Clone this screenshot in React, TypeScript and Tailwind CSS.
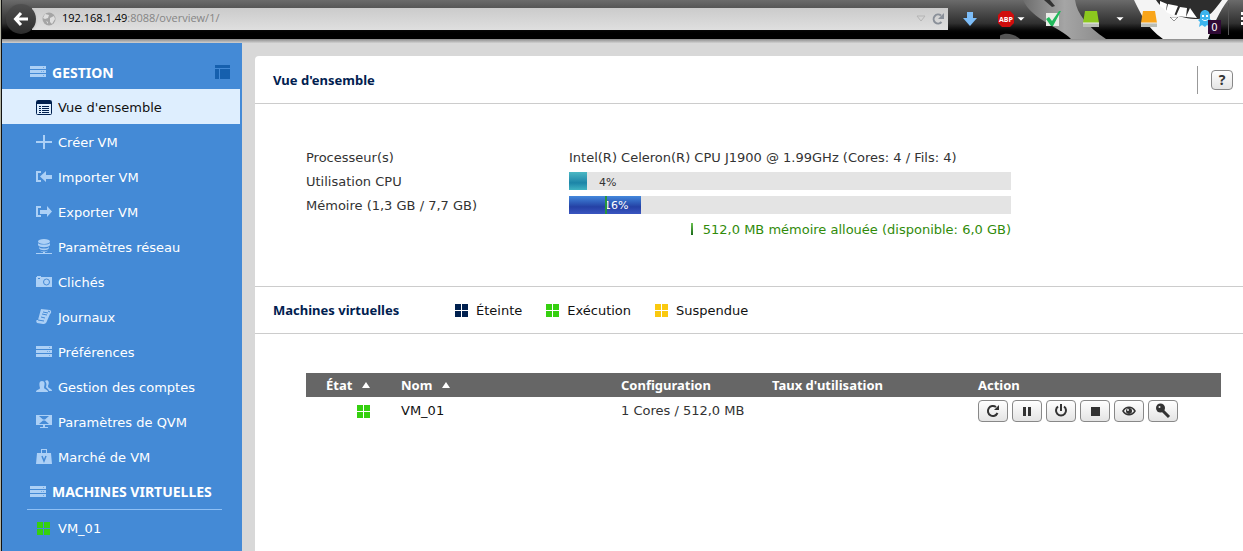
import type { ReactNode } from "react";

const logoTiles = "M0 0h6v6H0z M7 0h6v6H7z M0 7h6v6H0z M7 7h6v6H7z";

function Tiles({ className }: { className: string }) {
  return (
    <svg viewBox="0 0 13 13" className={"w-[13px] h-[13px] shrink-0 " + className} fill="currentColor">
      <path d={logoTiles} />
    </svg>
  );
}

function Servers() {
  return (
    <>
      <path d="M0 2h16v3H0z M0 6h16v3H0z M0 10h16v3H0z" />
      <path d="M13 3h1v1h-1z M11 7h1v1h-1z M13 7h1v1h-1z M13 11h1v1h-1z" fill="#6fa9e6" />
    </>
  );
}

function NavIcon({ children }: { children: ReactNode }) {
  return (
    <svg viewBox="0 0 16 16" className="w-4 h-4 shrink-0" fill="currentColor">
      {children}
    </svg>
  );
}

const navItems = [
  {
    label: "Vue d'ensemble",
    active: true,
    icon: (
      <>
        <rect x="0.500" y="1.500" width="15" height="14" rx="1" fill="none" stroke="currentColor" />
        <path d="M1 2h14v3H1z M3 7h2v1H3z M6 7h7v1H6z M3 9h2v1H3z M6 9h7v1H6z M3 11h2v1H3z M6 11h7v1H6z M3 13h2v1H3z M6 13h7v1H6z" />
      </>
    ),
  },
  { label: "Créer VM", icon: <path d="M7 1h2v6h7v2H9v6H7V9H0V7h7z" /> },
  {
    label: "Importer VM",
    icon: <path d="M0 2h5v2H2v7h3v2H0z M4 7.500L10 2v4h6v4h-6v3z" />,
  },
  {
    label: "Exporter VM",
    icon: <path d="M0 2h5v2H2v7h3v2H0z M16 7.500L11 2v4H4v4h7v3z" />,
  },
  {
    label: "Paramètres réseau",
    icon: (
      <>
        <ellipse cx="8" cy="2.500" rx="6" ry="2.500" />
        <path d="M2 4c1 2 11 2 12 0v2c-1 3-11 3-12 0z M3 8c1 2 9 2 10 0v1c-1 3-9 3-10 0z M4 11c1 2 7 2 8 0-1 2-2 2-3 2v1h7v1H0v-1h7v-1c-1 0-2 0-3-2z" />
      </>
    ),
  },
  {
    label: "Clichés",
    icon: (
      <>
        <path d="M1 3V2h4v1h11v10H0V3z" />
        <circle cx="10.500" cy="8" r="3" fill="none" stroke="#448ad6" />
        <path d="M2 4h2v1H2z" fill="#448ad6" />
      </>
    ),
  },
  {
    label: "Journaux",
    icon: (
      <>
        <path d="M5 0l9 1c2 1 1 4 0 4l-3 7c-1 3-3 3-4 3l-6-1c-1-1-1-3 0-3h1z" />
        <path d="M7 3l5 1 M6 5l5 1 M5 8l4 1 M2 11l6 1 M12 2l2 1" fill="none" stroke="#448ad6" />
      </>
    ),
  },
  { label: "Préférences", icon: <Servers /> },
  {
    label: "Gestion des comptes",
    icon: (
      <>
        <path d="M6 2c3 0 3 3 2 6 0 3 4 2 4 5H0c0-3 4-2 4-4C3 5 3 2 6 2z" />
        <path d="M9 2c3-2 5 1 3 5 0 3 4 2 4 5h-3c0-2-3-3-3-4 1-3 0-5-1-6z" />
      </>
    ),
  },
  {
    label: "Paramètres de QVM",
    icon: (
      <>
        <path d="M0 1h16v10H9v2h3v1H4v-1h3v-2H0z" />
        <path d="M3 2h10L9 5.500z M3 10h10L9 6.500H7z M3 2l4 3.500h2z" fill="#448ad6" />
      </>
    ),
  },
  {
    label: "Marché de VM",
    icon: (
      <>
        <path d="M5 0h6v4h4l1 11H0L1 4h4z M6 1v3h4V1z" fillRule="evenodd" />
        <path d="M6 7l2 5 2-5" fill="none" stroke="#448ad6" strokeWidth="1.5" />
      </>
    ),
  },
];

function SectionTitle({ children }: { children: ReactNode }) {
  return (
    <h2 className="flex items-center gap-1.5 font-['Noto_Sans',sans-serif] text-[14px] font-bold text-white">
      <span className="text-[#acd0f6]">
        <NavIcon>
          <Servers />
        </NavIcon>
      </span>
      {children}
    </h2>
  );
}

function Caret() {
  return (
    <svg viewBox="0 0 8 4" className="w-2 h-1 shrink-0" fill="#fff" stroke="#333" strokeWidth="0.5">
      <path d="M0 0h8L4 4z" />
    </svg>
  );
}

function SortArrow() {
  return (
    <svg viewBox="0 0 8 6" className="h-1.5 w-2" fill="#fff">
      <path d="M4 0l4 6H0z" />
    </svg>
  );
}

function Drive({ color }: { color: string }) {
  return (
    <svg viewBox="0 0 18 18" className="w-[18px] h-[18px] shrink-0">
      <path d="M3 1h12l2 12H1z" fill={color} />
      <path d="M1 13h16v4H1z" fill="#b9bdb6" />
      <path d="M1 13h16" stroke="#eee" />
    </svg>
  );
}

// persona artwork behind the toolbar icons
function Persona() {
  return (
    <svg viewBox="0 0 243 39" className="absolute top-0 right-0 h-full w-[243px]">
      <defs>
        <linearGradient id="smoke" x1="0" x2="1">
          <stop offset="0" stopColor="#6d6d6d" />
          <stop offset="0.5" stopColor="#a5a5a5" />
          <stop offset="1" stopColor="#8a8a8a" />
        </linearGradient>
      </defs>
      <path d="M23 0h52c2 14 12 26 31 39H71C60 27 32 20 23 0z" fill="url(#smoke)" />
      <path d="M44 0l8 7 3-1-5-6z" fill="#333" />
      <path d="M-4 39c5-7 16-7 24 0z" fill="#555" />
      <path d="M134 0h94c-9 12-14 24-20 39h-45C146 27 141 14 134 0z" fill="#f4f4f4" />
      <path d="M156 0h66c-7 9-13 19-24 19-19 0-35-8-42-19z" fill="#2d2d2d" />
      <path d="M160 1l7 3-1 7-6-5z M168 4l10 2-4 10-8-4z M180 7l7 1-1 9-10-1z M190 8l7 10-11-1z" fill="#fff" />
    </svg>
  );
}

function BrowserBar() {
  return (
    <header className="relative flex h-[39px] items-center overflow-hidden bg-linear-to-b from-[#6b6b6b] via-[#303030] via-60% to-black to-90% pb-0.5">
      <Persona />
      <button aria-label="Retour" className="z-10 ml-1 grid h-[30px] w-[30px] shrink-0 place-items-center rounded-full bg-linear-to-b from-[#505050] to-[#2c2c2c] shadow">
        <svg viewBox="0 0 16 16" className="h-4 w-4" fill="none" stroke="#fff" strokeWidth="3">
          <path d="M8 2L2.500 8 8 14 M3 8h12" />
        </svg>
      </button>
      <div className="-ml-1 flex h-[22px] min-w-0 flex-1 items-center bg-linear-to-b from-[#cbcbcb] to-[#dfdfdf] pr-1 pl-2.5">
        <svg viewBox="0 0 14 14" className="h-3.5 w-3.5 shrink-0">
          <circle cx="7" cy="7" r="6.500" fill="#a4a4a4" />
          <path d="M3 2l4 1-1 3-3 1-2-1z M8 6l4-2 1 3-3 5-2-2z M4 9l2 1v2z" fill="#dedede" />
        </svg>
        <div className="ml-1.5 flex-1 font-['Open_Sans',sans-serif] text-[11px] text-[#858585]">
          <span className="text-black">192.168.1.49</span>:8088/overview/1/
        </div>
        <svg viewBox="0 0 10 7" className="h-[7px] w-2.5" fill="none" stroke="#b5b5b5">
          <path d="M1 1h8L5 6z" />
        </svg>
        <button aria-label="Recharger" className="ml-1.5">
          <svg viewBox="0 0 12 12" className="h-3 w-3" fill="none" stroke="#8a9099" strokeWidth="2">
            <path d="M9.500 9A4.500 4.500 0 1 1 9 2.500" />
            <path d="M12 0v6H6z" fill="#8a9099" stroke="none" />
          </svg>
        </button>
      </div>
      <div className="relative flex w-[295px] shrink-0 items-center">
        <svg viewBox="0 0 14 16" className="ml-[15px] h-4 w-3.5 shrink-0">
          <path d="M4 1h6v6h4l-7 8-7-8h4z" fill="#7dbdf8" />
        </svg>
        <svg viewBox="0 0 18 18" className="ml-5 h-[18px] w-[18px] shrink-0">
          <path d="M5 1h8l4 4v8l-4 4H5l-4-4V5z" fill="#d00d0d" />
          <text x="9" y="12" textAnchor="middle" fontSize="7" fontWeight="700" fill="#fff" fontFamily="Open Sans">ABP</text>
        </svg>
        <span className="ml-0.5"><Caret /></span>
        <svg viewBox="0 0 17 18" className="ml-5 h-[18px] w-[17px] shrink-0">
          <path d="M1 3h13v13H1z" fill="#e9ece7" />
          <path d="M1 9l3-2 3 4 7-10h2L8 16H6z" fill="#22b95c" />
        </svg>
        <span className="ml-5"><Drive color="#8cc81e" /></span>
        <span className="ml-4"><Caret /></span>
        <span className="ml-4"><Drive color="#f9a51a" /></span>
        <span className="ml-1.5 h-6 w-px bg-[#bbb]" />
        <span className="ml-1.5"><Caret /></span>
        <div className="relative ml-5">
          <svg viewBox="0 0 14 18" className="h-[18px] w-3.5">
            <path d="M2 6c0-8 10-8 10 0v3l2 2-2 1v5l-3-2-2 2-3-2-3 2 1-5-2-2 2-1z" fill="#3cb4ee" />
            <path d="M4 5h2v2H4z M8 5h2v2H8z" fill="#fff" />
            <path d="M4 9c1 2 5 2 6 0" fill="none" stroke="#fff" />
          </svg>
          <span className="absolute top-2.5 left-2.5 grid h-3.5 w-[13px] place-items-center bg-[#300a36] text-[10px] text-white">0</span>
        </div>
        <span className="ml-4 h-8 w-px shrink-0 bg-[#555]" />
        <button aria-label="Menu" className="ml-3 shrink-0">
          <svg viewBox="0 0 16 14" className="h-3.5 w-4" fill="#fff">
            <path d="M0 0h16v3H0z M0 5h16v3H0z M0 10h16v3H0z" />
          </svg>
        </button>
      </div>
    </header>
  );
}

function Sidebar() {
  return (
    <aside className="w-60 shrink-0 bg-[#448ad6] pt-3">
      <div className="flex h-[34px] items-center justify-between pr-3 pl-7">
        <SectionTitle>GESTION</SectionTitle>
        <button aria-label="Disposition">
          <svg viewBox="0 0 15 14" className="h-3.5 w-[15px]" fill="#1660ae">
            <path d="M0 0h15v3H0z M0 4h4v10H0z M5 4h10v10H5z" />
          </svg>
        </button>
      </div>
      <nav>
        {navItems.map((item) => (
          <a
            key={item.label}
            href="#"
            className={
              "mr-0.5 flex h-[35px] items-center gap-1.5 pl-[34px] " +
              (item.active ? "bg-[#deeefe] text-[#00204f]" : "text-[#acd0f6]")
            }
          >
            <NavIcon>{item.icon}</NavIcon>
            <span className={"pt-0.5 " + (item.active ? "text-[#111]" : "text-white")}>{item.label}</span>
          </a>
        ))}
      </nav>
      <div className="mr-5 ml-[25px] flex h-9 items-center border-b border-[#8fc0f5] pl-[3px]">
        <SectionTitle>MACHINES VIRTUELLES</SectionTitle>
      </div>
      <a href="#" className="flex h-[37px] items-center gap-2 pl-[35px] text-white">
        <Tiles className="text-[#35d00f]" />
        VM_01
      </a>
    </aside>
  );
}

const actions = [
  {
    label: "Redémarrer",
    icon: (
      <>
        <path d="M12.500 10A5 5 0 1 1 11 4" fill="none" stroke="currentColor" strokeWidth="2" />
        <path d="M14 2v5H9z" />
      </>
    ),
  },
  { label: "Pause", icon: <path d="M4 4h3v9H4z M9 4h3v9H9z" /> },
  { label: "Arrêter", icon: <path d="M5 3.500a5 5 0 1 0 6 0 M8 1v7" fill="none" stroke="currentColor" strokeWidth="2" /> },
  { label: "Forcer l'arrêt", icon: <path d="M4 4h9v9H4z" /> },
  {
    label: "Console",
    icon: (
      <>
        <path d="M2 8c3-5 9-5 12 0-3 5-9 5-12 0z" fill="none" stroke="currentColor" strokeWidth="1.5" />
        <circle cx="8" cy="8" r="3" />
        <circle cx="7" cy="7" r="1" fill="#eee" />
      </>
    ),
  },
  {
    label: "Accès",
    icon: (
      <>
        <circle cx="5.500" cy="5" r="4.500" />
        <path d="M7 7l7 7" stroke="currentColor" strokeWidth="3" />
        <circle cx="4.500" cy="4" r="1" fill="#eee" />
      </>
    ),
  },
];

const iconButton =
  "grid place-items-center rounded border border-[#888] bg-linear-to-b from-white to-[#e4e4e4] text-[#333]";

function Meter({ label, value, children }: { label: string; value: number; children: ReactNode }) {
  return (
    <div role="meter" aria-label={label} aria-valuenow={value} className="relative h-[18px] self-center bg-[#e4e4e4] text-[11px]">
      {children}
    </div>
  );
}

export default function App() {
  return (
    <div className="flex min-h-screen flex-col border-l border-[#b5b5a5] bg-[#d8d8d8] font-['DejaVu_Sans',sans-serif] text-[13px] text-[#333]">
      <div className="flex flex-1 flex-col border-l border-[#111]">
        <BrowserBar />
        <div className="h-1 bg-linear-to-b from-[#8c8c8c] to-[#d0d0d0]" />
        <div className="flex flex-1">
          <Sidebar />
          <main className="mt-[13px] ml-[13px] min-w-0 flex-1 rounded-tl bg-white">
            <div className="flex h-12 items-center justify-between border-b border-[#ccc] pl-[18px]">
              <h1 className="pt-0.5 font-['Noto_Sans',sans-serif] font-bold text-[#00204f]">Vue d'ensemble</h1>
              <div className="flex h-7 items-center border-l border-[#999] pr-2.5 pl-[13px]">
                <button aria-label="Aide" className={iconButton + " h-5 w-[22px] font-['Noto_Sans',sans-serif] text-[14px] leading-none font-bold"}>?</button>
              </div>
            </div>

            <section className="grid h-[182px] auto-rows-[24px] grid-cols-[263px_442px] content-start pt-[41px] pl-[51px] leading-[26px]">
              <span>Processeur(s)</span>
              <span className="whitespace-nowrap">Intel(R) Celeron(R) CPU J1900 @ 1.99GHz (Cores: 4 / Fils: 4)</span>
              <span>Utilisation CPU</span>
              <Meter label="Utilisation CPU" value={4}>
                <div style={{ width: "4%" }} className="h-full bg-linear-to-b from-[#4bb8c4] via-[#1c85a8] via-60% to-[#3fb3c2]" />
                <span className="absolute top-0.5 left-[30px] leading-[18px]">4%</span>
              </Meter>
              <span>Mémoire (1,3 GB / 7,7 GB)</span>
              <Meter label="Mémoire" value={16}>
                <div className="h-full w-[72px] bg-linear-to-b from-[#4488dc] via-[#2541a5] via-60% to-[#3a55c0]" />
                <span className="absolute top-px left-[35px] leading-[18px] text-white">16%</span>
                <span className="absolute top-0 left-9 h-full w-0.5 bg-[#27963c]" />
              </Meter>
              <p className="col-start-2 flex items-center justify-end gap-2.5 whitespace-nowrap text-[#318b0b]">
                <span className="h-3 w-0.5 bg-linear-to-b from-[#6bc452] to-[#176a18]" />
                <span className="pt-0.5">512,0 MB mémoire allouée (disponible: 6,0 GB)</span>
              </p>
            </section>

            <div className="flex h-12 items-center border-y border-[#ccc] pl-[18px] text-[#111]">
              <h2 className="w-[182px] pt-0.5 font-['Noto_Sans',sans-serif] font-bold text-[#00204f]">Machines virtuelles</h2>
              <ul className="flex gap-6">
                <li className="flex items-center gap-2"><Tiles className="text-[#00204f]" /><span className="pt-0.5">Éteinte</span></li>
                <li className="flex items-center gap-2"><Tiles className="text-[#35d00f]" /><span className="pt-0.5">Exécution</span></li>
                <li className="flex items-center gap-2"><Tiles className="text-[#fac90e]" /><span className="pt-0.5">Suspendue</span></li>
              </ul>
            </div>

            <div className="pt-[39px] pr-[22px] pl-[51px]">
              <table className="w-full table-fixed text-left">
                <thead className="bg-[#666] font-['Noto_Sans',sans-serif] leading-6 text-white">
                  <tr>
                    <th className="w-[95px] p-0 pl-5"><div className="flex items-center gap-2.5">État <SortArrow /></div></th>
                    <th className="w-[220px] p-0"><div className="flex items-center gap-2.5">Nom <SortArrow /></div></th>
                    <th className="w-[151px] p-0">Configuration</th>
                    <th className="w-[206px] p-0">Taux d'utilisation</th>
                    <th className="p-0">Action</th>
                  </tr>
                </thead>
                <tbody>
                  <tr className="h-7">
                    <td className="p-0 pl-[51px]"><Tiles className="text-[#35d00f]" /></td>
                    <td className="p-0 text-[#111]">VM_01</td>
                    <td className="p-0">1 Cores / 512,0 MB</td>
                    <td />
                    <td className="p-0">
                      <div className="flex gap-1">
                        {actions.map((action) => (
                          <button key={action.label} aria-label={action.label} className={iconButton + " h-[22px] w-[30px]"}>
                            <svg viewBox="0 0 16 16" className="h-4 w-4" fill="currentColor">
                              {action.icon}
                            </svg>
                          </button>
                        ))}
                      </div>
                    </td>
                  </tr>
                </tbody>
              </table>
            </div>
          </main>
        </div>
      </div>
    </div>
  );
}
